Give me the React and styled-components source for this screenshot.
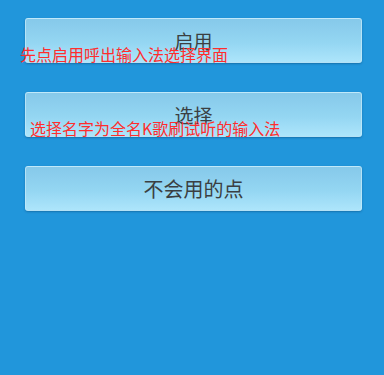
import React from "react";
import styled, { createGlobalStyle } from "styled-components";

const GlobalStyle = createGlobalStyle`
  html, body {
    margin: 0;
    padding: 0;
    background: #2196db;
  }
  body {
    font-family: "Noto Sans CJK SC", "Noto Sans", sans-serif;
  }
`;

const Screen = styled.div`
  width: 384px;
  height: 375px;
  background: #2196db;
  padding-top: 18px;
  box-sizing: border-box;
  display: flex;
  flex-direction: column;
  gap: 29px;
  overflow: hidden;
`;

const Section = styled.div`
  position: relative;
  padding: 0 22px 0 25px;
`;

const Button = styled.button`
  width: 100%;
  height: 45px;
  display: flex;
  align-items: center;
  justify-content: center;
  border: 1px solid rgba(200, 235, 250, 0.7);
  border-radius: 3px;
  background: linear-gradient(to bottom, #86c9ea 0%, #94d6f2 55%, #ade5fb 100%);
  box-shadow: 0 1px 2px rgba(0, 50, 90, 0.35);
  font-family: "Noto Sans CJK SC", "Noto Sans", sans-serif;
  font-size: ${(p) => p.size || 19}px;
  color: #3b3f42;
  padding: 0;
  box-sizing: border-box;
  cursor: pointer;
`;

const Caption = styled.span`
  position: absolute;
  left: ${(p) => p.left}px;
  top: ${(p) => p.top}px;
  font-family: "Noto Sans CJK SC", "Noto Sans", sans-serif;
  font-size: 16px;
  line-height: 18px;
  color: #ff2d2d;
  white-space: nowrap;
  pointer-events: none;
`;

const items = [
  { label: "启用", caption: "先点启用呼出输入法选择界面", left: 20, top: 27 },
  { label: "选择", caption: "选择名字为全名K歌刷试听的输入法", left: 30, top: 27 },
  { label: "不会用的点", size: 20 },
];

export default function App() {
  return (
    <>
      <GlobalStyle />
      <Screen>
        {items.map((it) => (
          <Section key={it.label}>
            <Button size={it.size}>{it.label}</Button>
            {it.caption && (
              <Caption left={it.left} top={it.top}>
                {it.caption}
              </Caption>
            )}
          </Section>
        ))}
      </Screen>
    </>
  );
}
